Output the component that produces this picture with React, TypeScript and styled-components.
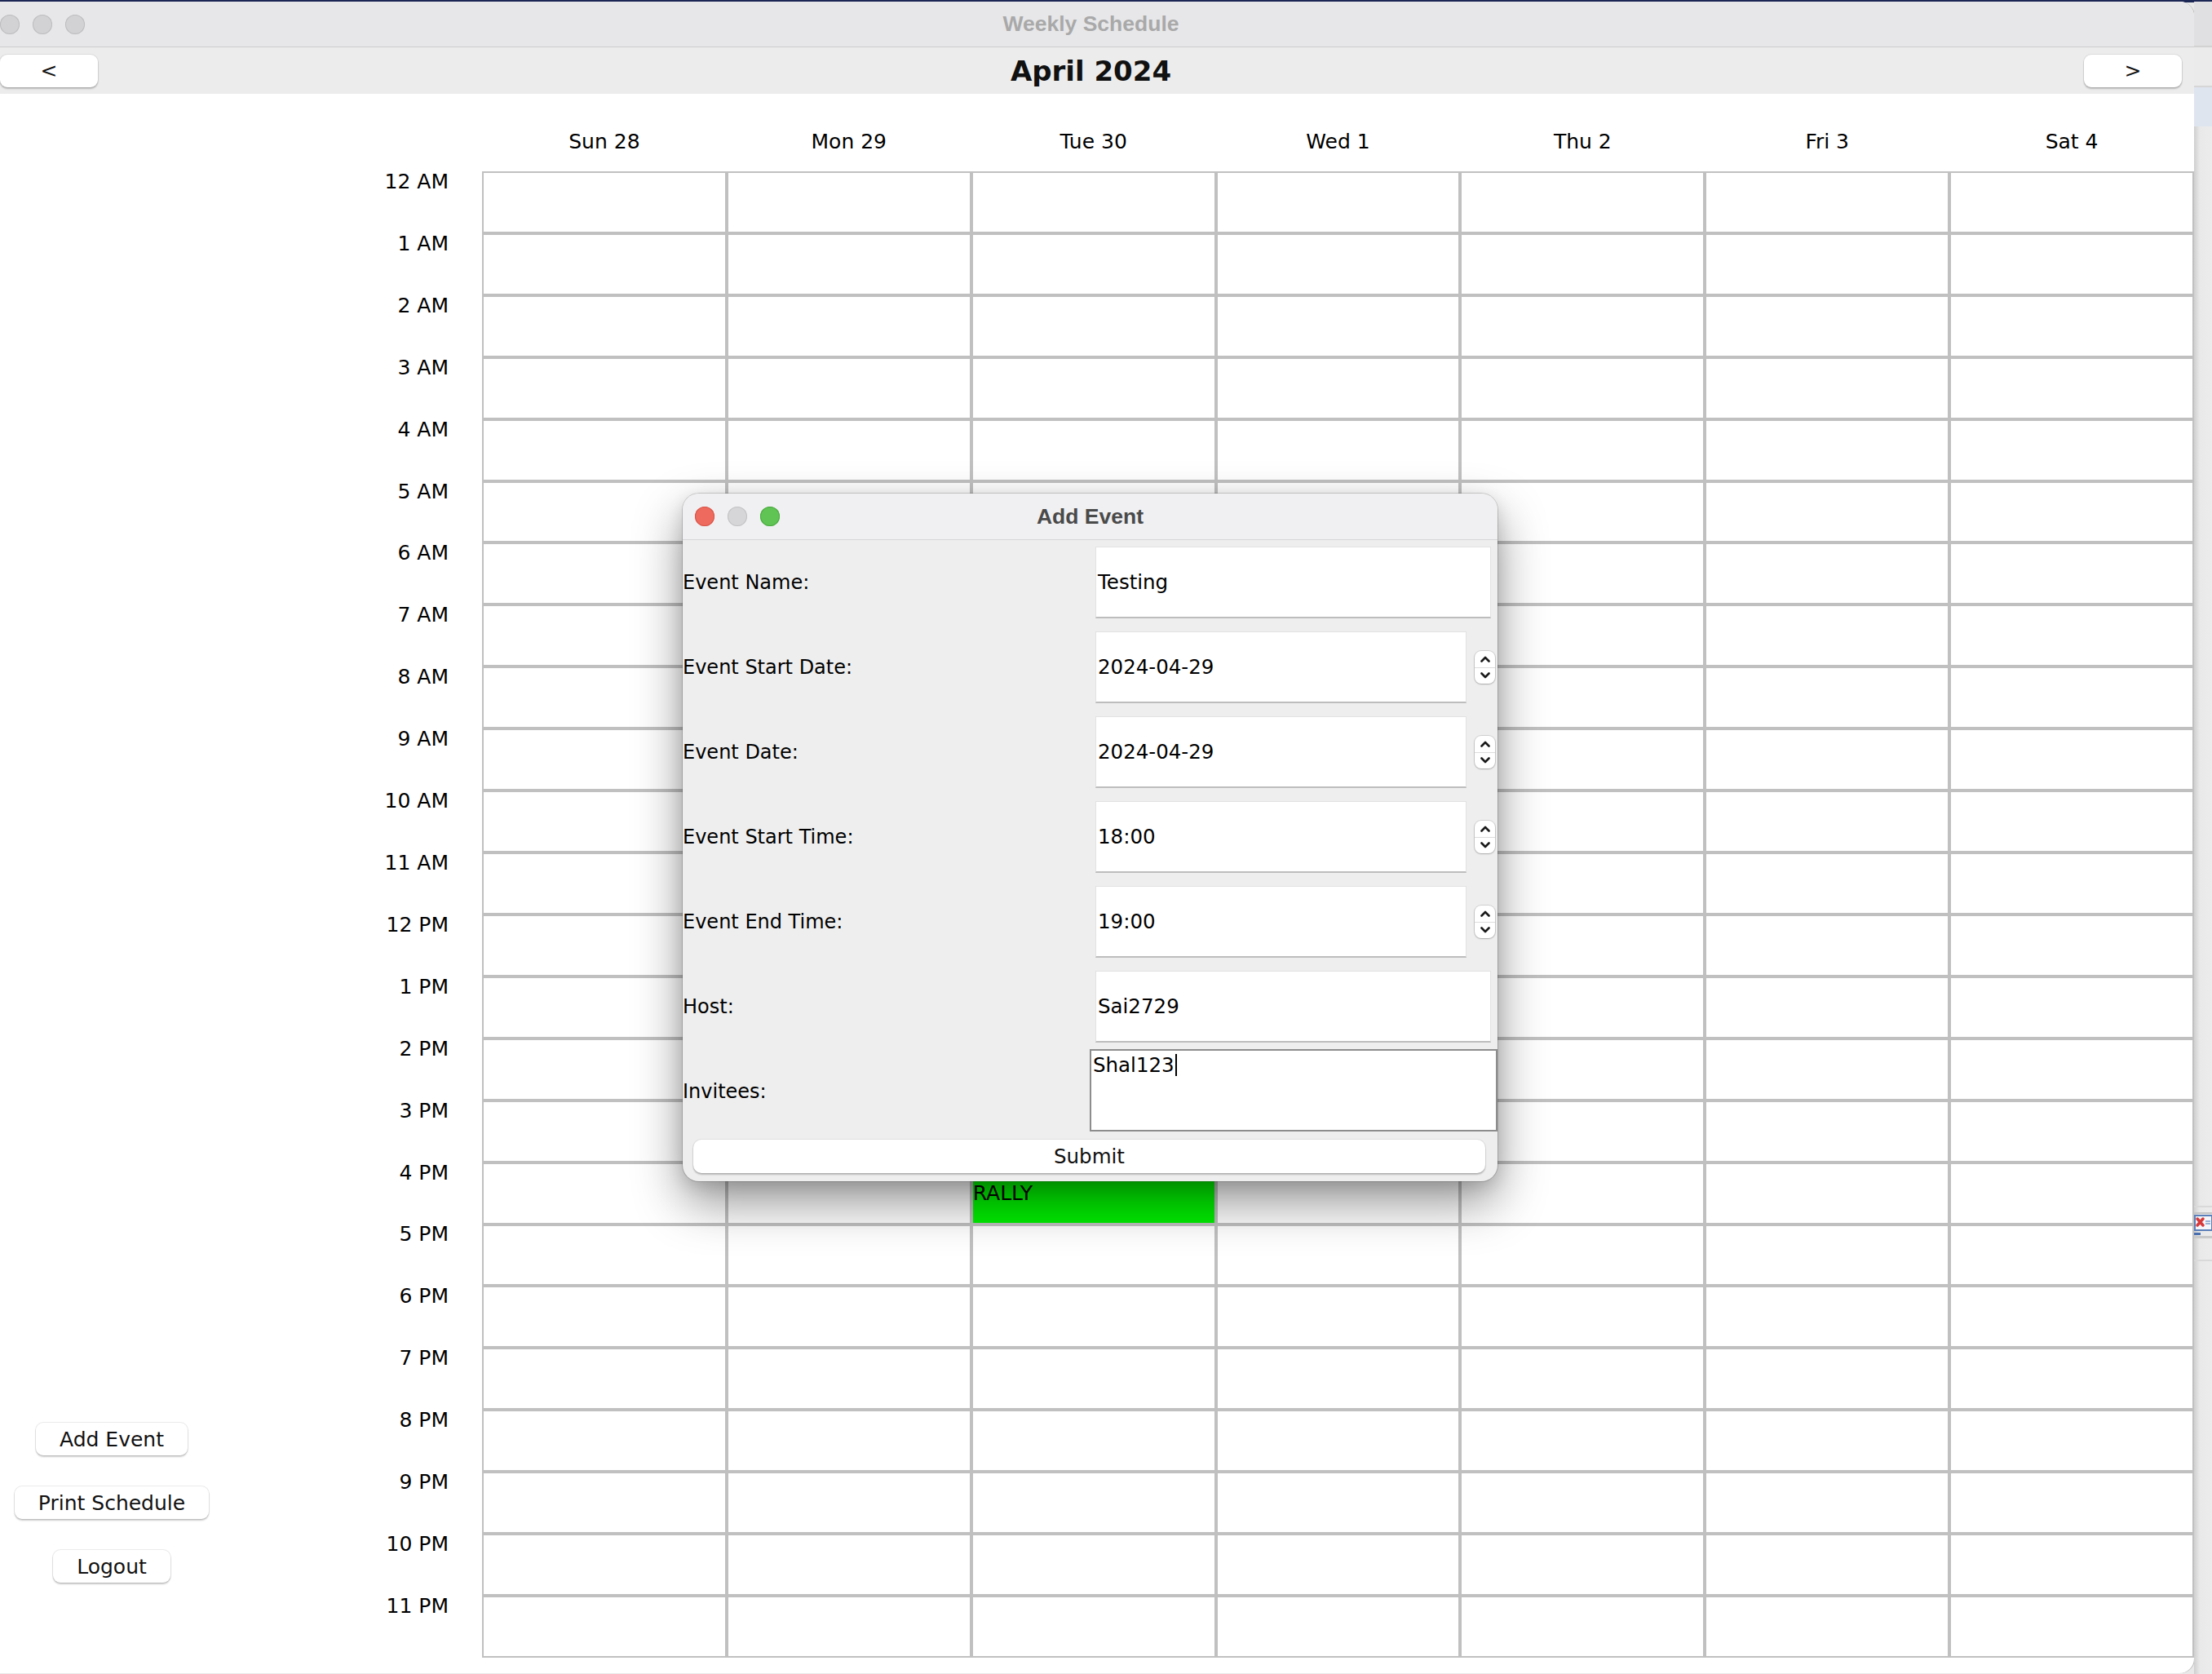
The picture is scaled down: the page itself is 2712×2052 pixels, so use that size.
import React from "react";
import styled, { createGlobalStyle } from "styled-components";

const GlobalStyle = createGlobalStyle`
  html, body { margin: 0; padding: 0; }
  body {
    width: 2712px;
    height: 2052px;
    overflow: hidden;
    background: #e9e9e9;
    font-family: "DejaVu Sans", "Liberation Sans", sans-serif;
    color: #000;
  }
  #root { width: 2712px; height: 2052px; }
  * { box-sizing: border-box; }
`;

const Screen = styled.div`
  position: relative;
  width: 2712px;
  height: 2052px;
  overflow: hidden;
  display: flex;
  align-items: flex-start;
  padding-top: 2px;
  background: linear-gradient(#1d2756 0 3px, #e9e9e9 3px);
`;

const Window = styled.div`
  flex: none;
  margin-left: -15px;
  width: 2705px;
  height: 2049px;
  display: flex;
  flex-direction: column;
  background: #fff;
  border-radius: 0 18px 18px 0;
  overflow: hidden;
  box-shadow: 1px 0 0 #b9b9b9;
`;

const TitleBar = styled.div<{ $active?: boolean }>`
  flex: none;
  height: ${(p) => (p.$active ? 57 : 56)}px;
  display: grid;
  grid-template-columns: 1fr auto 1fr;
  align-items: center;
  padding: 0 15px;
  background: ${(p) => (p.$active ? "#f0f0f2" : "#e7e7e9")};
  border-bottom: 1px solid ${(p) => (p.$active ? "#d6d6d8" : "#cdcdcf")};
`;

const Lights = styled.div`
  display: flex;
  gap: 16px;
`;

const Light = styled.span<{ $fill: string; $edge: string }>`
  width: 24px;
  height: 24px;
  border-radius: 50%;
  background: ${(p) => p.$fill};
  box-shadow: inset 0 0 0 1px ${(p) => p.$edge};
`;

const TitleText = styled.div<{ $active?: boolean }>`
  font-family: "Liberation Sans", Arial, sans-serif;
  font-weight: 700;
  font-size: 26.5px;
  color: ${(p) => (p.$active ? "#4a4a4a" : "#a9a9a9")};
  white-space: nowrap;
`;

const NavRow = styled.div`
  flex: none;
  height: 57px;
  display: grid;
  grid-template-columns: 120px 1fr 120px;
  align-items: center;
  padding: 0 15px;
  background: #ececec;
`;

const NavButton = styled.button`
  height: 40px;
  width: 120px;
  border: none;
  border-radius: 9px;
  background: #fff;
  box-shadow: 0 0 0 1px rgba(0, 0, 0, 0.07), 0 2px 2px rgba(0, 0, 0, 0.22);
  font-family: "DejaVu Sans", sans-serif;
  font-size: 25px;
  color: #111;
  padding: 0;
  line-height: 40px;
`;

const MonthTitle = styled.div`
  text-align: center;
  font-family: "DejaVu Sans", sans-serif;
  font-weight: 700;
  font-size: 34px;
  color: #111;
`;

const Content = styled.div`
  flex: 1;
  display: flex;
  min-height: 0;
`;

const LeftPanel = styled.div`
  flex: none;
  width: 304px;
  display: flex;
  flex-direction: column;
  align-items: center;
  justify-content: flex-end;
  gap: 38px;
  padding-bottom: 111px;
`;

const SideButton = styled.button`
  height: 40px;
  padding: 0 29px;
  border: none;
  border-radius: 9px;
  background: #fff;
  box-shadow: 0 0 0 1px rgba(0, 0, 0, 0.08), 0 2px 2px rgba(0, 0, 0, 0.2);
  font-family: "DejaVu Sans", sans-serif;
  font-size: 25px;
  color: #111;
  white-space: nowrap;
`;

const TimeColumn = styled.div`
  flex: none;
  width: 302px;
  padding: 95px 41px 0 0;
  display: grid;
  grid-template-rows: repeat(24, 75.92px);
`;

const TimeLabel = styled.div`
  text-align: right;
  font-size: 25px;
  line-height: 26px;
  white-space: nowrap;
`;

const GridColumn = styled.div`
  flex: none;
  width: 2099px;
  display: flex;
  flex-direction: column;
`;

const DayHeader = styled.div`
  height: 95px;
  display: grid;
  grid-template-columns: repeat(7, 1fr);
  column-gap: 4px;
  padding: 44px 2px 0;
`;

const DayLabel = styled.div`
  text-align: center;
  font-size: 25px;
  line-height: 30px;
  white-space: nowrap;
`;

const CalendarGrid = styled.div`
  height: 1822px;
  display: grid;
  grid-template-columns: repeat(7, 1fr);
  grid-template-rows: repeat(24, 1fr);
  gap: 4px;
  padding: 2px;
  background: #c0c0c0;
`;

const Cell = styled.div<{ $event?: boolean }>`
  background: ${(p) => (p.$event ? "#00f000" : "#fff")};
  display: flex;
  align-items: center;
  font-size: 25px;
  color: #000;
  overflow: hidden;
  white-space: nowrap;
`;

const BackWindow = styled.div`
  flex: 1;
  align-self: stretch;
  display: flex;
  flex-direction: column;
  background: linear-gradient(to right, #cfcfcf, #e9e9e9 7px, #ececec);
`;

const BackBar = styled.div<{ $h: number; $bg?: string; $line?: string }>`
  flex: none;
  height: ${(p) => p.$h}px;
  background: ${(p) => p.$bg ?? "transparent"};
  border-bottom: ${(p) => (p.$line ? `2px solid ${p.$line}` : "none")};
`;

const BackIcon = styled.div`
  flex: none;
  height: 30px;
  display: flex;
  align-items: center;
  border-bottom: 3px solid #c9c9c9;
`;

const Dialog = styled.div`
  position: absolute;
  left: 837px;
  top: 605px;
  width: 999px;
  height: 843px;
  display: flex;
  flex-direction: column;
  border-radius: 20px;
  overflow: hidden;
  background: #eeeeee;
  box-shadow: 0 0 0 1px rgba(0, 0, 0, 0.16), 0 26px 60px rgba(0, 0, 0, 0.42),
    0 6px 20px rgba(0, 0, 0, 0.12);
`;

const Form = styled.div`
  display: grid;
  grid-template-columns: 499px 1fr;
  grid-auto-rows: 104px;
`;

const FieldLabel = styled.div`
  display: flex;
  align-items: center;
  font-size: 24px;
  white-space: nowrap;
`;

const FieldCell = styled.div<{ $area?: boolean }>`
  display: flex;
  align-items: ${(p) => (p.$area ? "stretch" : "center")};
  padding: ${(p) => (p.$area ? "0 0 3px 0" : "0 3px 0 7px")};
`;

const TextField = styled.div<{ $spin?: boolean }>`
  flex: 1;
  height: 88px;
  margin-right: ${(p) => (p.$spin ? 0 : 5)}px;
  display: flex;
  align-items: center;
  padding-left: 2px;
  background: #fff;
  border: 1px solid #e2e2e2;
  border-bottom: 2px solid #bdbdbd;
  font-size: 24.5px;
  white-space: nowrap;
`;

const SpinBox = styled.div`
  flex: none;
  width: 25px;
  height: 40px;
  margin-left: 10px;
  display: flex;
  flex-direction: column;
  border-radius: 8px;
  background: #fff;
  box-shadow: 0 0 0 1px rgba(0, 0, 0, 0.12), 0 1px 2px rgba(0, 0, 0, 0.18);
  overflow: hidden;
`;

const SpinHalf = styled.div<{ $top?: boolean }>`
  flex: 1;
  display: flex;
  align-items: center;
  justify-content: center;
  border-bottom: ${(p) => (p.$top ? "1px solid #dcdcdc" : "none")};
`;

const TextArea = styled.div`
  flex: 1;
  background: #fff;
  border: 2px solid #8d8d8d;
  padding: 3px 2px;
  font-size: 24.5px;
  line-height: 30px;
  white-space: nowrap;
`;

const Caret = styled.span`
  display: inline-block;
  width: 2px;
  height: 27px;
  margin-left: 1px;
  background: #000;
  vertical-align: -5px;
`;

const Footer = styled.div`
  padding: 7px 15px 0 13px;
`;

const SubmitButton = styled.button`
  width: 100%;
  height: 41px;
  border: none;
  border-radius: 10px;
  background: #fff;
  box-shadow: 0 0 0 1px rgba(0, 0, 0, 0.06), 0 2px 2px rgba(0, 0, 0, 0.22);
  font-family: "DejaVu Sans", sans-serif;
  font-size: 24.5px;
  color: #111;
  padding: 0;
`;

const days = ["Sun 28", "Mon 29", "Tue 30", "Wed 1", "Thu 2", "Fri 3", "Sat 4"];
const hours = Array.from({ length: 24 }, (_, i) => {
  const h = i % 12 === 0 ? 12 : i % 12;
  return `${h} ${i < 12 ? "AM" : "PM"}`;
});

const Chevron = ({ up }: { up?: boolean }) => (
  <svg width="12" height="8" viewBox="0 0 12 8">
    <path
      d={up ? "M1.5 6.5 L6 2 L10.5 6.5" : "M1.5 1.5 L6 6 L10.5 1.5"}
      fill="none"
      stroke="#1a1a1a"
      strokeWidth="2.6"
      strokeLinecap="round"
      strokeLinejoin="round"
    />
  </svg>
);

const Spinner = () => (
  <SpinBox>
    <SpinHalf $top>
      <Chevron up />
    </SpinHalf>
    <SpinHalf>
      <Chevron />
    </SpinHalf>
  </SpinBox>
);

const formRows: { label: string; value: string; spin?: boolean }[] = [
  { label: "Event Name:", value: "Testing" },
  { label: "Event Start Date:", value: "2024-04-29", spin: true },
  { label: "Event Date:", value: "2024-04-29", spin: true },
  { label: "Event Start Time:", value: "18:00", spin: true },
  { label: "Event End Time:", value: "19:00", spin: true },
  { label: "Host:", value: "Sai2729" },
];

export default function App() {
  return (
    <>
      <GlobalStyle />
      <Screen>
        <Window>
          <TitleBar>
            <Lights>
              <Light $fill="#d2d2d4" $edge="#bdbdbf" />
              <Light $fill="#d2d2d4" $edge="#bdbdbf" />
              <Light $fill="#d2d2d4" $edge="#bdbdbf" />
            </Lights>
            <TitleText>Weekly Schedule</TitleText>
            <span />
          </TitleBar>
          <NavRow>
            <NavButton>&lt;</NavButton>
            <MonthTitle>April 2024</MonthTitle>
            <NavButton>&gt;</NavButton>
          </NavRow>
          <Content>
            <LeftPanel>
              <SideButton>Add Event</SideButton>
              <SideButton>Print Schedule</SideButton>
              <SideButton>Logout</SideButton>
            </LeftPanel>
            <TimeColumn>
              {hours.map((h) => (
                <TimeLabel key={h}>{h}</TimeLabel>
              ))}
            </TimeColumn>
            <GridColumn>
              <DayHeader>
                {days.map((d) => (
                  <DayLabel key={d}>{d}</DayLabel>
                ))}
              </DayHeader>
              <CalendarGrid>
                {hours.map((h, r) =>
                  days.map((d, c) => {
                    const isEvent = r === 16 && c === 2;
                    return (
                      <Cell key={`${h}-${d}`} $event={isEvent}>
                        {isEvent ? "RALLY" : null}
                      </Cell>
                    );
                  })
                )}
              </CalendarGrid>
            </GridColumn>
          </Content>
        </Window>
        <BackWindow>
          <BackBar $h={56} $bg="#e0e0e2" $line="#d2d2d2" />
          <BackBar $h={49} $bg="#ebebeb" $line="#d6d6d6" />
          <BackBar $h={48} $bg="#dfe5ee" />
          <BackBar $h={1325} $line="#d9d9d9" />
          <BackBar $h={8} $line="#c4c4c4" />
          <BackIcon>
            <svg width="22" height="26" viewBox="0 0 22 26">
              <rect x="1" y="1" width="21" height="18" fill="#f4f6fa" stroke="#5b7fb8" strokeWidth="2" />
              <path d="M4 5 L11 13 M11 5 L4 13" stroke="#d83a3a" strokeWidth="3.5" strokeLinecap="round" />
              <path d="M14 8 H20 M14 11 H20" stroke="#7d9ac8" strokeWidth="1.5" />
              <rect x="0" y="22" width="8" height="3" fill="#4a6fae" />
            </svg>
          </BackIcon>
          <BackBar $h={28} $line="#d9d9d9" />
        </BackWindow>
        <Dialog>
          <TitleBar $active>
            <Lights>
              <Light $fill="#ee6a5e" $edge="#d65447" />
              <Light $fill="#d6d6d8" $edge="#c2c2c4" />
              <Light $fill="#5fc454" $edge="#4aa83f" />
            </Lights>
            <TitleText $active>Add Event</TitleText>
            <span />
          </TitleBar>
          <Form>
            {formRows.map((row) => (
              <React.Fragment key={row.label}>
                <FieldLabel>{row.label}</FieldLabel>
                <FieldCell>
                  <TextField $spin={row.spin}>{row.value}</TextField>
                  {row.spin ? <Spinner /> : null}
                </FieldCell>
              </React.Fragment>
            ))}
            <FieldLabel>Invitees:</FieldLabel>
            <FieldCell $area>
              <TextArea>
                Shal123
                <Caret />
              </TextArea>
            </FieldCell>
          </Form>
          <Footer>
            <SubmitButton>Submit</SubmitButton>
          </Footer>
        </Dialog>
      </Screen>
    </>
  );
}
